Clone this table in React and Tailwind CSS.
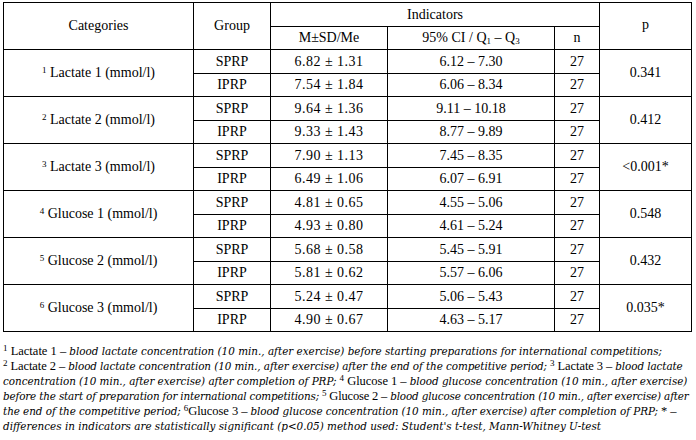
import React from "react";

const groups = [
  { sup: "1", name: "Lactate 1 (mmol/l)", p: "0.341", rows: [["SPRP", "6.82 ± 1.31", "6.12 – 7.30", "27"], ["IPRP", "7.54 ± 1.84", "6.06 – 8.34", "27"]] },
  { sup: "2", name: "Lactate 2 (mmol/l)", p: "0.412", rows: [["SPRP", "9.64 ± 1.36", "9.11 – 10.18", "27"], ["IPRP", "9.33 ± 1.43", "8.77 – 9.89", "27"]] },
  { sup: "3", name: "Lactate 3 (mmol/l)", p: "<0.001*", rows: [["SPRP", "7.90 ± 1.13", "7.45 – 8.35", "27"], ["IPRP", "6.49 ± 1.06", "6.07 – 6.91", "27"]] },
  { sup: "4", name: "Glucose 1 (mmol/l)", p: "0.548", rows: [["SPRP", "4.81 ± 0.65", "4.55 – 5.06", "27"], ["IPRP", "4.93 ± 0.80", "4.61 – 5.24", "27"]] },
  { sup: "5", name: "Glucose 2 (mmol/l)", p: "0.432", rows: [["SPRP", "5.68 ± 0.58", "5.45 – 5.91", "27"], ["IPRP", "5.81 ± 0.62", "5.57 – 6.06", "27"]] },
  { sup: "6", name: "Glucose 3 (mmol/l)", p: "0.035*", rows: [["SPRP", "5.24 ± 0.47", "5.06 – 5.43", "27"], ["IPRP", "4.90 ± 0.67", "4.63 – 5.17", "27"]] },
];

const td = "border border-black text-center align-middle p-0";
const num = "tracking-[0.5px]";

function I({ children }) {
  return <span className="italic font-['DejaVu_Serif',serif] text-[10.4px]">{children}</span>;
}
function S({ children }) {
  return <sup className="text-[9px]">{children}</sup>;
}

export default function App() {
  return (
    <div className="w-[696px] h-[440px] bg-white text-black font-['Liberation_Serif','Times_New_Roman',serif] text-[13px] leading-none overflow-hidden">
      <div className="pt-[2px] pl-[3px]">
        <table className="border-collapse table-fixed w-[688px] text-[14px]">
          <colgroup>
            <col className="w-[190px]" />
            <col className="w-[77px]" />
            <col className="w-[117px]" />
            <col className="w-[167px]" />
            <col className="w-[45px]" />
            <col className="w-[92px]" />
          </colgroup>
          <tbody>
            <tr className="h-[24px]">
              <td rowSpan={2} className={td}>Categories</td>
              <td rowSpan={2} className={td}>Group</td>
              <td colSpan={3} className={td}>Indicators</td>
              <td rowSpan={2} className={`${td} pb-[2px]`}>p</td>
            </tr>
            <tr className="h-[23px]">
              <td className={td}>M±SD/Me</td>
              <td className={td}>95% CI / Q<sub className="text-[9px]">1</sub> – Q<sub className="text-[9px]">3</sub></td>
              <td className={td}>n</td>
            </tr>
            {groups.map((g) => (
              <React.Fragment key={g.sup}>
                <tr className="h-[24px]">
                  <td rowSpan={2} className={td}><S>{g.sup}</S> {g.name}</td>
                  <td className={td}>{g.rows[0][0]}</td>
                  <td className={`${td} ${num}`}>{g.rows[0][1]}</td>
                  <td className={td}>{g.rows[0][2]}</td>
                  <td className={td}>{g.rows[0][3]}</td>
                  <td rowSpan={2} className={td}>{g.p}</td>
                </tr>
                <tr className="h-[23px]">
                  <td className={td}>{g.rows[1][0]}</td>
                  <td className={`${td} ${num}`}>{g.rows[1][1]}</td>
                  <td className={td}>{g.rows[1][2]}</td>
                  <td className={td}>{g.rows[1][3]}</td>
                </tr>
              </React.Fragment>
            ))}
          </tbody>
        </table>
        <div className="mt-[12px] leading-[15px] whitespace-nowrap text-[12.5px]">
          <div><S>1</S> Lactate 1 – <I>blood lactate concentration (10 min., after exercise) before starting preparations for international competitions;</I></div>
          <div className="tracking-[-0.08px]"><S>2</S> Lactate 2 – <I>blood lactate concentration (10 min., after exercise) after the end of the competitive period;</I> <S>3</S> Lactate 3 – <I>blood lactate</I></div>
          <div className="tracking-[-0.03px]"><I>concentration (10 min., after exercise) after completion of PRP;</I> <S>4</S> Glucose 1 – <I>blood glucose concentration (10 min., after exercise)</I></div>
          <div className="tracking-[-0.16px]"><I>before the start of preparation for international competitions;</I> <S>5</S> Glucose 2 – <I>blood glucose concentration (10 min., after exercise) after</I></div>
          <div className="tracking-[-0.05px]"><I>the end of the competitive period;</I> <S>6</S>Glucose 3 – <I>blood glucose concentration (10 min., after exercise) after completion of PRP;</I> * –</div>
          <div><I>differences in indicators are statistically significant (p&lt;0.05) method used: Student's t-test, Mann-Whitney U-test</I></div>
        </div>
      </div>
    </div>
  );
}
